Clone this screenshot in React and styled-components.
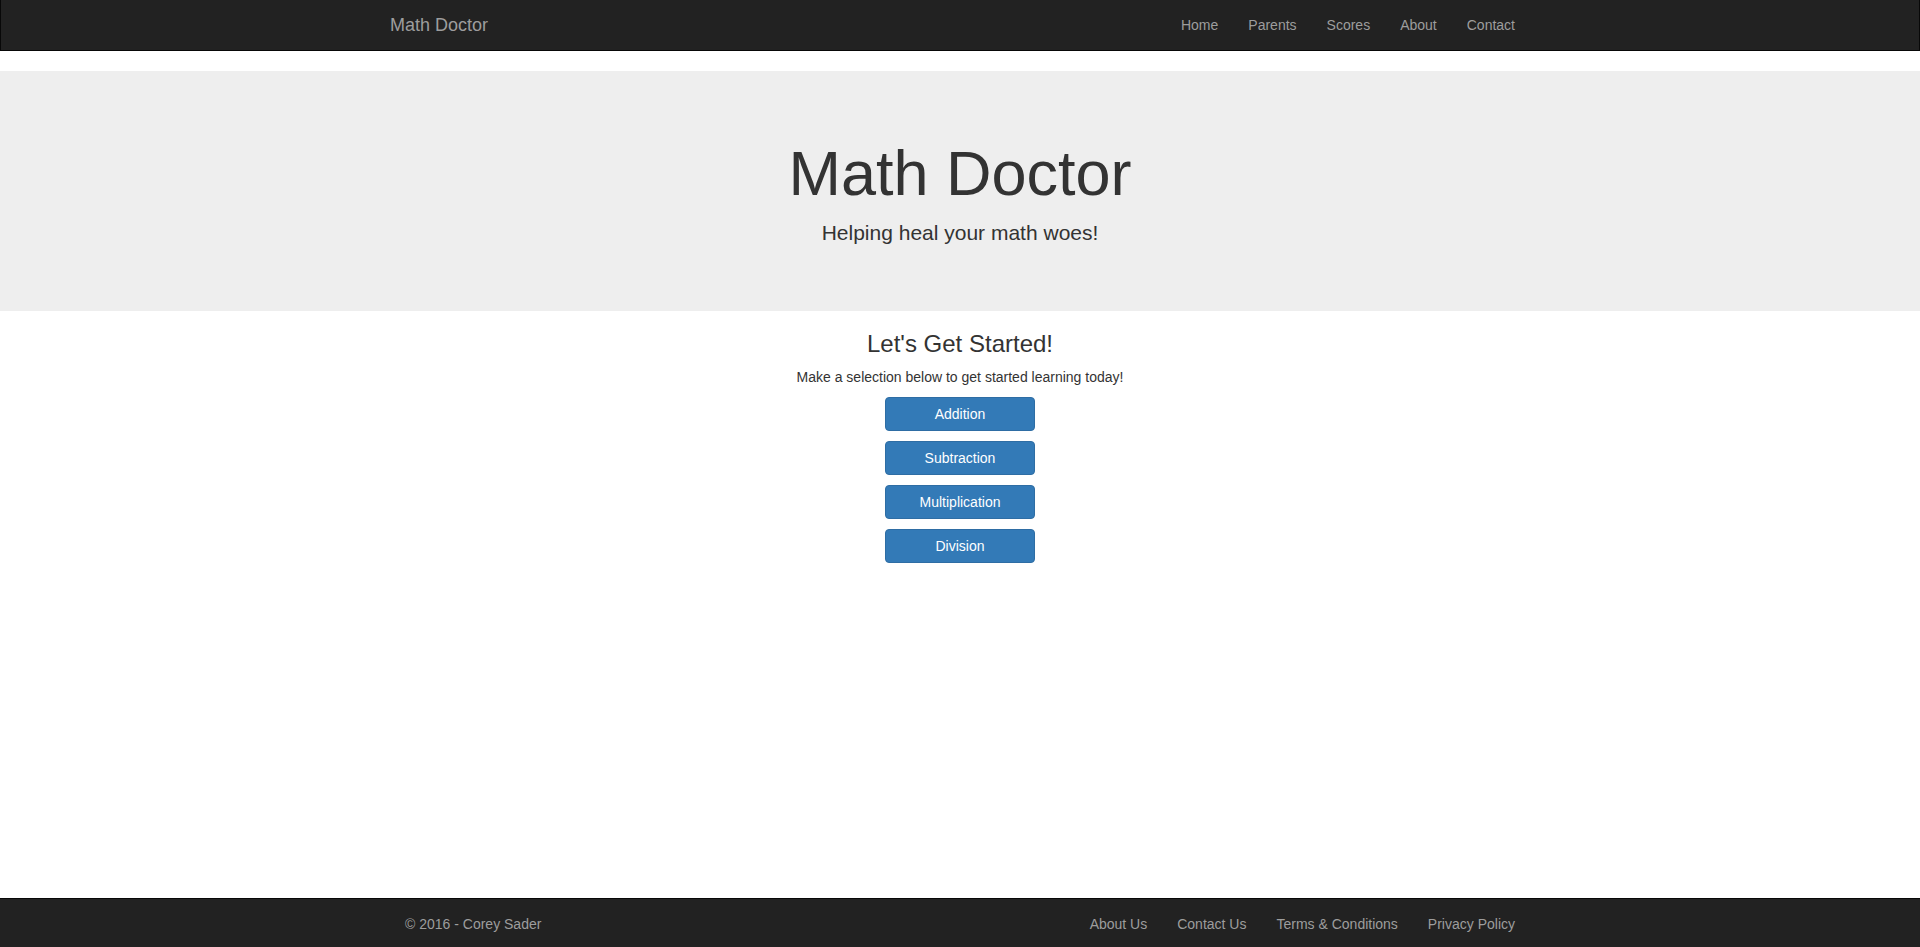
import React from "react";
import styled, { createGlobalStyle } from "styled-components";

const GlobalStyle = createGlobalStyle`
  * { box-sizing: border-box; }
  html, body { margin: 0; padding: 0; }
  body {
    font-family: "Liberation Sans", Arial, Helvetica, sans-serif;
    font-size: 14px;
    line-height: 1.42857143;
    color: #333;
    background: #fff;
  }
`;

const Page = styled.div`
  min-height: 100vh;
  display: flex;
  flex-direction: column;
`;

const Container = styled.div`
  width: 1170px;
  margin: 0 auto;
  padding: 0 15px;
  display: flex;
  align-items: center;
  justify-content: space-between;
`;

const Navbar = styled.nav`
  background: #222;
  border: solid #080808;
  border-width: 0 1px 1px 1px;
  min-height: 50px;
  margin-bottom: 20px;
`;

const Brand = styled.a`
  display: block;
  margin-left: -15px;
  padding: 15px;
  height: 50px;
  font-size: 18px;
  line-height: 20px;
  color: #9d9d9d;
  text-decoration: none;
`;

const NavList = styled.ul`
  display: flex;
  list-style: none;
  margin: 0;
  padding: 0;
`;

const NavLink = styled.a`
  display: block;
  padding: ${(p) => (p.$footer ? "15px 15px 13px" : "15px 15px")};
  line-height: 20px;
  font-size: 14px;
  color: #9d9d9d;
  text-decoration: none;
`;

const Jumbotron = styled.header`
  background: #eee;
  padding: 48px 0;
  text-align: center;
`;

const HeroTitle = styled.h1`
  font-size: 63px;
  line-height: 1.1;
  font-weight: 500;
  margin: 20px 0 10px;
  color: #333;
`;

const HeroLead = styled.p`
  font-size: 21px;
  font-weight: 200;
  line-height: 1.42857143;
  margin: 0 0 15px;
`;

const Main = styled.main`
  flex: 1;
  display: flex;
  flex-direction: column;
  align-items: center;
`;

const SectionTitle = styled.h3`
  font-size: 24px;
  line-height: 1.1;
  font-weight: 500;
  margin: 20px 0 9px;
  color: #333;
`;

const Intro = styled.p`
  margin: 0 0 10px;
`;

const ButtonStack = styled.div`
  display: flex;
  flex-direction: column;
  gap: 10px;
`;

const PrimaryButton = styled.button`
  width: 150px;
  height: 34px;
  padding: 6px 12px;
  font-family: inherit;
  font-size: 14px;
  line-height: 20px;
  color: #fff;
  background: #337ab7;
  border: 1px solid #2e6da4;
  border-radius: 4px;
  cursor: pointer;
`;

const Footer = styled.footer`
  background: #222;
  border-top: 1px solid #080808;
`;

const Copyright = styled.span`
  padding: 15px 15px 13px;
  line-height: 20px;
  color: #9d9d9d;
`;

const navItems = ["Home", "Parents", "Scores", "About", "Contact"];
const footerItems = ["About Us", "Contact Us", "Terms & Conditions", "Privacy Policy"];
const topics = ["Addition", "Subtraction", "Multiplication", "Division"];

export default function App() {
  return (
    <Page>
      <GlobalStyle />
      <Navbar>
        <Container>
          <Brand href="#">Math Doctor</Brand>
          <NavList>
            {navItems.map((item) => (
              <li key={item}>
                <NavLink href="#">{item}</NavLink>
              </li>
            ))}
          </NavList>
        </Container>
      </Navbar>
      <Jumbotron>
        <HeroTitle>Math Doctor</HeroTitle>
        <HeroLead>Helping heal your math woes!</HeroLead>
      </Jumbotron>
      <Main>
        <SectionTitle>Let's Get Started!</SectionTitle>
        <Intro>Make a selection below to get started learning today!</Intro>
        <ButtonStack>
          {topics.map((t) => (
            <PrimaryButton key={t}>{t}</PrimaryButton>
          ))}
        </ButtonStack>
      </Main>
      <Footer>
        <Container>
          <Copyright>© 2016 - Corey Sader</Copyright>
          <NavList>
            {footerItems.map((item) => (
              <li key={item}>
                <NavLink $footer href="#">{item}</NavLink>
              </li>
            ))}
          </NavList>
        </Container>
      </Footer>
    </Page>
  );
}
